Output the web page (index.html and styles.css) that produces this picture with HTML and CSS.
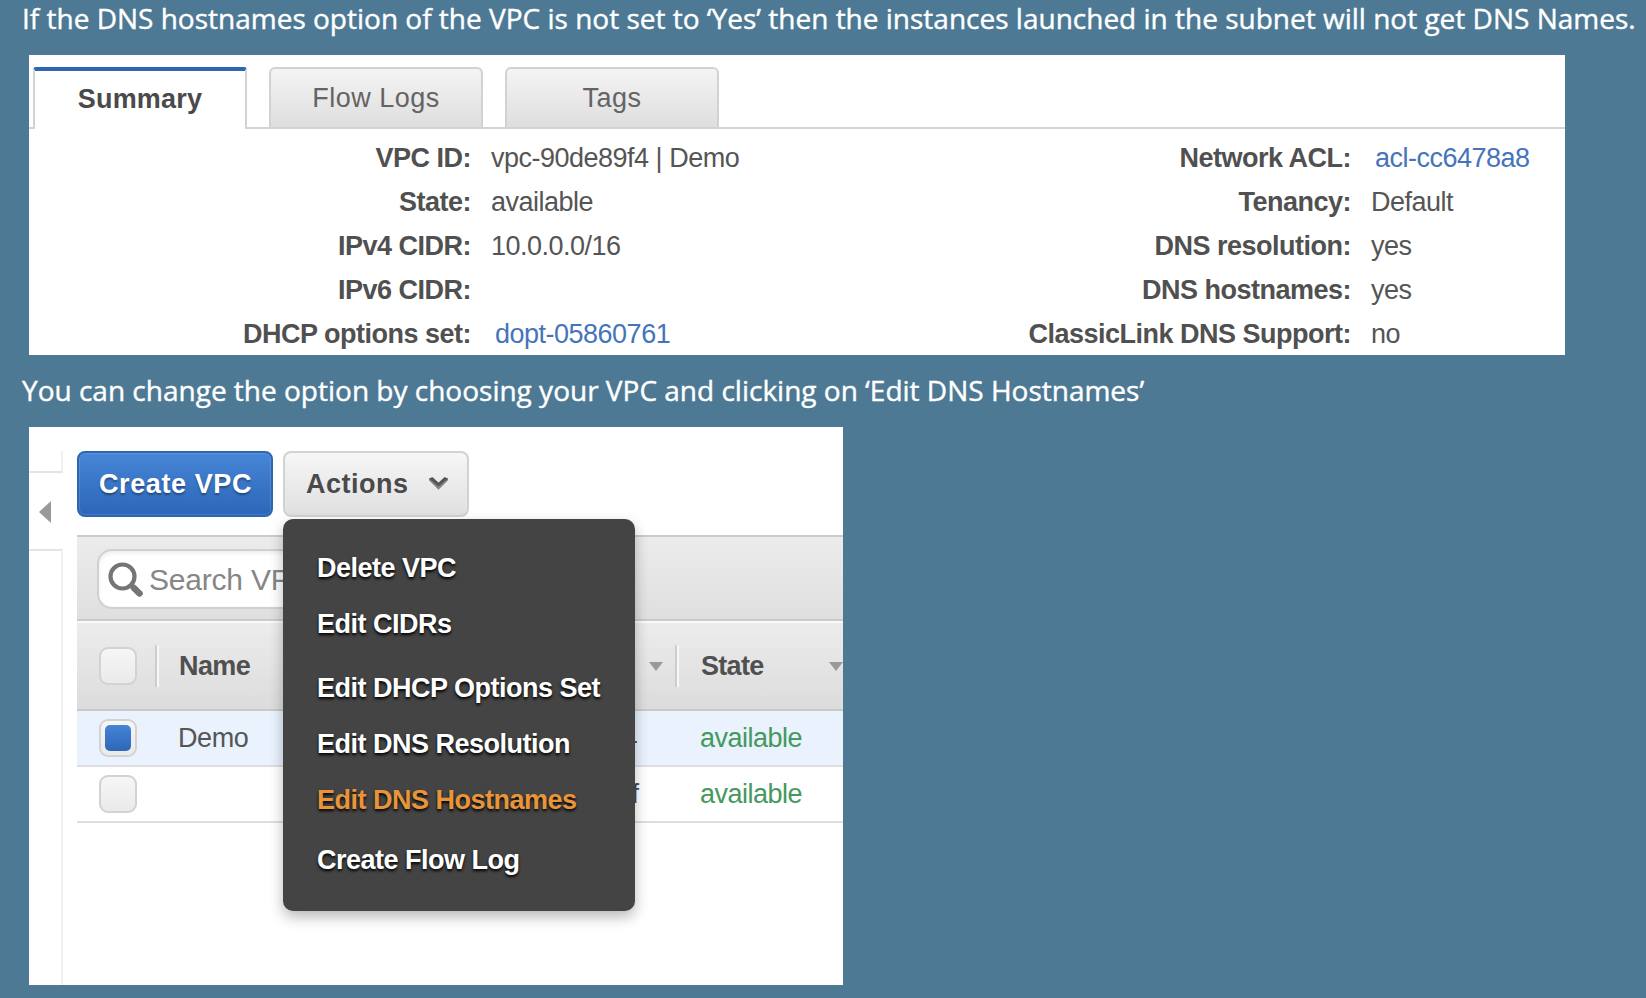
FILE: index.html
```html
<!DOCTYPE html>
<html lang="en">
<head>
<meta charset="utf-8">
<title>VPC DNS hostnames</title>
<link rel="stylesheet" href="styles.css">
</head>
<body>
<main class="page">
  <p class="note note-first">If the DNS hostnames option of the VPC is not set to ‘Yes’ then the instances launched in the subnet will not get DNS Names.</p>

  <section class="summary">
    <nav class="tabs">
      <span class="tab tab-active">Summary</span>
      <span class="tab">Flow Logs</span>
      <span class="tab">Tags</span>
    </nav>
    <div class="details">
      <dl class="facts facts-left">
        <dt>VPC ID:</dt><dd>vpc-90de89f4 | Demo</dd>
        <dt>State:</dt><dd>available</dd>
        <dt>IPv4 CIDR:</dt><dd>10.0.0.0/16</dd>
        <dt>IPv6 CIDR:</dt><dd></dd>
        <dt>DHCP options set:</dt><dd><a class="link">dopt-05860761</a></dd>
      </dl>
      <dl class="facts facts-right">
        <dt>Network ACL:</dt><dd><a class="link">acl-cc6478a8</a></dd>
        <dt>Tenancy:</dt><dd>Default</dd>
        <dt>DNS resolution:</dt><dd>yes</dd>
        <dt>DNS hostnames:</dt><dd>yes</dd>
        <dt>ClassicLink DNS Support:</dt><dd>no</dd>
      </dl>
    </div>
  </section>

  <p class="note note-second">You can change the option by choosing your VPC and clicking on ‘Edit DNS Hostnames’</p>

  <section class="console">
    <aside class="rail">
      <div class="rail-top"></div>
      <div class="rail-handle"><svg width="12" height="22" viewBox="0 0 12 22"><path d="M12 0v22L0 11z" fill="#999"/></svg></div>
      <div class="rail-body"></div>
    </aside>
    <div class="main">
      <div class="buttons">
        <button class="btn btn-primary">Create VPC</button>
        <button class="btn btn-plain">Actions
          <svg class="chevron" width="19" height="13" viewBox="0 0 19 13"><path d="M0 1.500L3.500.3 9.500 5.800 15.500.3 19 1.500v1.700L9.500 12.800 0 3.200z" fill="#858585"/><path d="M0 1.500L3.500.3 9.500 5.800 15.500.3 19 1.500l-9.500 8z" fill="#555"/></svg>
        </button>
      </div>
      <div class="toolbar">
        <div class="search">
          <svg width="36" height="36" viewBox="0 0 36 36" fill="none" stroke="#757575"><circle cx="14.500" cy="14.500" r="12" stroke-width="4.200"/><path d="M23 23l3 3" stroke-width="4.500"/><path d="M26 26l5.500 5.500" stroke-width="6.500" stroke-linecap="round"/></svg>
          <span>Search VPCs</span>
        </div>
      </div>
      <div class="row head">
        <span class="check"></span>
        <span class="divider"></span>
        <span class="name">Name</span>
        <span class="vpc"><svg class="sort" width="14" height="9" viewBox="0 0 14 9"><path d="M0 0h14L7 9z" fill="#999"/></svg></span>
        <span class="divider"></span>
        <span class="state">State</span>
        <svg class="sort" width="14" height="9" viewBox="0 0 14 9"><path d="M0 0h14L7 9z" fill="#999"/></svg>
      </div>
      <div class="row selected">
        <span class="check"><i class="mark"></i></span>
        <span class="name">Demo</span>
        <span class="vpc vpc-first">vpc-90de89f4</span>
        <span class="state">available</span>
      </div>
      <div class="row">
        <span class="check"></span>
        <span class="name"></span>
        <span class="vpc vpc-second">f</span>
        <span class="state">available</span>
      </div>
      <ul class="menu">
        <li>Delete VPC</li>
        <li>Edit CIDRs</li>
        <li class="group">Edit DHCP Options Set</li>
        <li>Edit DNS Resolution</li>
        <li class="hover">Edit DNS Hostnames</li>
        <li class="group-last">Create Flow Log</li>
      </ul>
    </div>
  </section>
</main>
</body>
</html>
```
FILE: styles.css
```css
* { box-sizing: border-box; }

body {
  margin: 0;
  background: #4d7994;
  color: #555;
  font: 27px/44px "Liberation Sans", Arial, sans-serif;
}

.page { width: 1646px; height: 998px; overflow: hidden; }

.note {
  margin: 0;
  padding-left: 22px;
  color: #fff;
  font: 28px/36px "Open Sans", sans-serif;
  -webkit-text-stroke: .4px #fff;
  white-space: nowrap;
}
.note-first { height: 55px; }
.note-second { height: 72px; padding-top: 17px; }

/* Summary panel */
.summary { width: 1536px; height: 300px; margin-left: 29px; background: #fff; overflow: hidden; }

.tabs {
  display: flex;
  gap: 22px;
  height: 74px;
  padding: 12px 0 0 4px;
  background: linear-gradient(#d4d4d4, #d4d4d4) 0 100% / 100% 2px no-repeat;
}
.tab {
  width: 214px;
  height: 60px;
  border: 2px solid #d2d2d2;
  border-bottom: 0;
  border-radius: 6px 6px 0 0;
  background: linear-gradient(#f4f4f4, #dedede);
  color: #646464;
  line-height: 58px;
  letter-spacing: .5px;
  text-align: center;
}
.tab-active {
  height: 62px;
  border-top: 4px solid #2f66b3;
  border-radius: 3px 3px 0 0;
  background: #fff;
  color: #4a4a4a;
  font-weight: bold;
  line-height: 57px;
  letter-spacing: .2px;
}

.details { display: flex; padding-top: 7px; }
.facts {
  display: grid;
  grid-auto-rows: 44px;
  column-gap: 20px;
  margin: 0;
  letter-spacing: -.5px;
  white-space: nowrap;
}
.facts-left { grid-template-columns: 442px 400px; }
.facts-right { grid-template-columns: 460px 190px; }
.facts dt { color: #505050; font-weight: bold; text-align: right; }
.facts dd { margin: 0; }
.link { margin-left: 4px; color: #4674ba; }

/* Console panel */
.console { display: flex; width: 814px; height: 558px; margin-left: 29px; background: #fff; overflow: hidden; }

.rail { display: flex; flex-direction: column; width: 34px; padding-top: 24px; }
.rail-top { height: 22px; border: solid #e4e4e4; border-width: 0 2px 2px 0; border-right-color: #f1f1f1; }
.rail-handle { display: flex; align-items: center; height: 76px; padding: 1px 0 0 10px; }
.rail-body { flex: 1; border: solid #e4e4e4; border-width: 2px 2px 0 0; border-right-color: #f1f1f1; }

.main { position: relative; width: 766px; margin-left: 14px; padding-top: 24px; }

.buttons { display: flex; gap: 10px; height: 84px; }
.btn {
  display: flex;
  align-items: center;
  height: 66px;
  padding: 0 0 1px 20px;
  border: 2px solid #d2d2d2;
  border-radius: 8px;
  font: bold 27px/30px "Liberation Sans", Arial, sans-serif;
  white-space: nowrap;
}
.btn-primary {
  width: 196px;
  border-color: #2e65b0;
  background: linear-gradient(#4785d6, #2c66b8);
  box-shadow: inset 0 0 0 1px rgba(255, 255, 255, .12);
  color: #fff;
  letter-spacing: .6px;
  text-shadow: 0 2px 2px rgba(0, 0, 0, .35);
}
.btn-plain { width: 186px; padding-left: 21px; background: linear-gradient(#f6f6f6, #e0e0e0); color: #4a4a4a; letter-spacing: .5px; }
.chevron { margin: 0 0 0 20px; }

.toolbar {
  height: 86px;
  padding: 12px 0 0 20px;
  border: solid #cbcbcb;
  border-width: 2px 0;
  background: linear-gradient(#ececec, #dfdfdf);
}
.search {
  display: flex;
  align-items: center;
  gap: 5px;
  width: 480px;
  height: 60px;
  padding: 2px 0 0 9px;
  border: 2px solid #d0d0d0;
  border-radius: 15px;
  background: #fff;
  box-shadow: inset 0 2px 4px rgba(0, 0, 0, .08);
  color: #868686;
  font-size: 30px;
  letter-spacing: -.2px;
  white-space: nowrap;
}

.row {
  display: flex;
  align-items: center;
  height: 56px;
  padding-left: 22px;
  border-bottom: 2px solid #dedede;
  letter-spacing: -.4px;
}
.head {
  height: 90px;
  border-top: 2px solid #fafafa;
  border-bottom-color: #c9c9c9;
  background: linear-gradient(#ececec, #dcdcdc);
  color: #505050;
  font-weight: bold;
  letter-spacing: -.6px;
}
.selected { background: #e9f2fd; }
.check {
  width: 38px;
  height: 38px;
  flex: none;
  padding: 4px;
  border: 2px solid #d2d2d2;
  border-radius: 9px;
  background: linear-gradient(#f6f6f6, #eaeaea);
}
.mark { display: block; width: 26px; height: 26px; border-radius: 5px; background: linear-gradient(#4684d6, #2d66b7); }
.divider { width: 4px; height: 42px; flex: none; border: solid; border-width: 0 2px; border-color: #cdcdcd #f8f8f8 #cdcdcd #cdcdcd; }
.head .divider { margin-left: 18px; }
.name { width: 100px; flex: none; margin-left: 41px; }
.head .name { margin-left: 20px; }
.vpc { display: flex; flex: none; justify-content: flex-end; width: 362px; color: #444c5c; }
.vpc-first { padding-right: 3px; }
.vpc-second { padding-right: 1.5px; }
.head .vpc { width: 384px; }
.state { width: 128px; flex: none; margin-left: 60px; color: #45995e; letter-spacing: -.5px; }
.head .state { width: 128px; margin-left: 22px; color: inherit; letter-spacing: -.7px; }
.head .vpc + .divider { margin-left: 12px; }
.sort { flex: none; }

.menu {
  position: absolute;
  top: 92px;
  left: 206px;
  width: 352px;
  height: 392px;
  margin: 0;
  padding: 21px 0 0 34px;
  border-radius: 10px;
  background: #444;
  box-shadow: 0 6px 14px rgba(0, 0, 0, .28);
  color: #fff;
  font-weight: bold;
  letter-spacing: -.5px;
  line-height: 56px;
  list-style: none;
  text-shadow: 0 2px 3px #000;
  white-space: nowrap;
}
.group { margin-top: 8px; }
.group-last { margin-top: 4px; }
.hover { color: #e8953a; }
```
